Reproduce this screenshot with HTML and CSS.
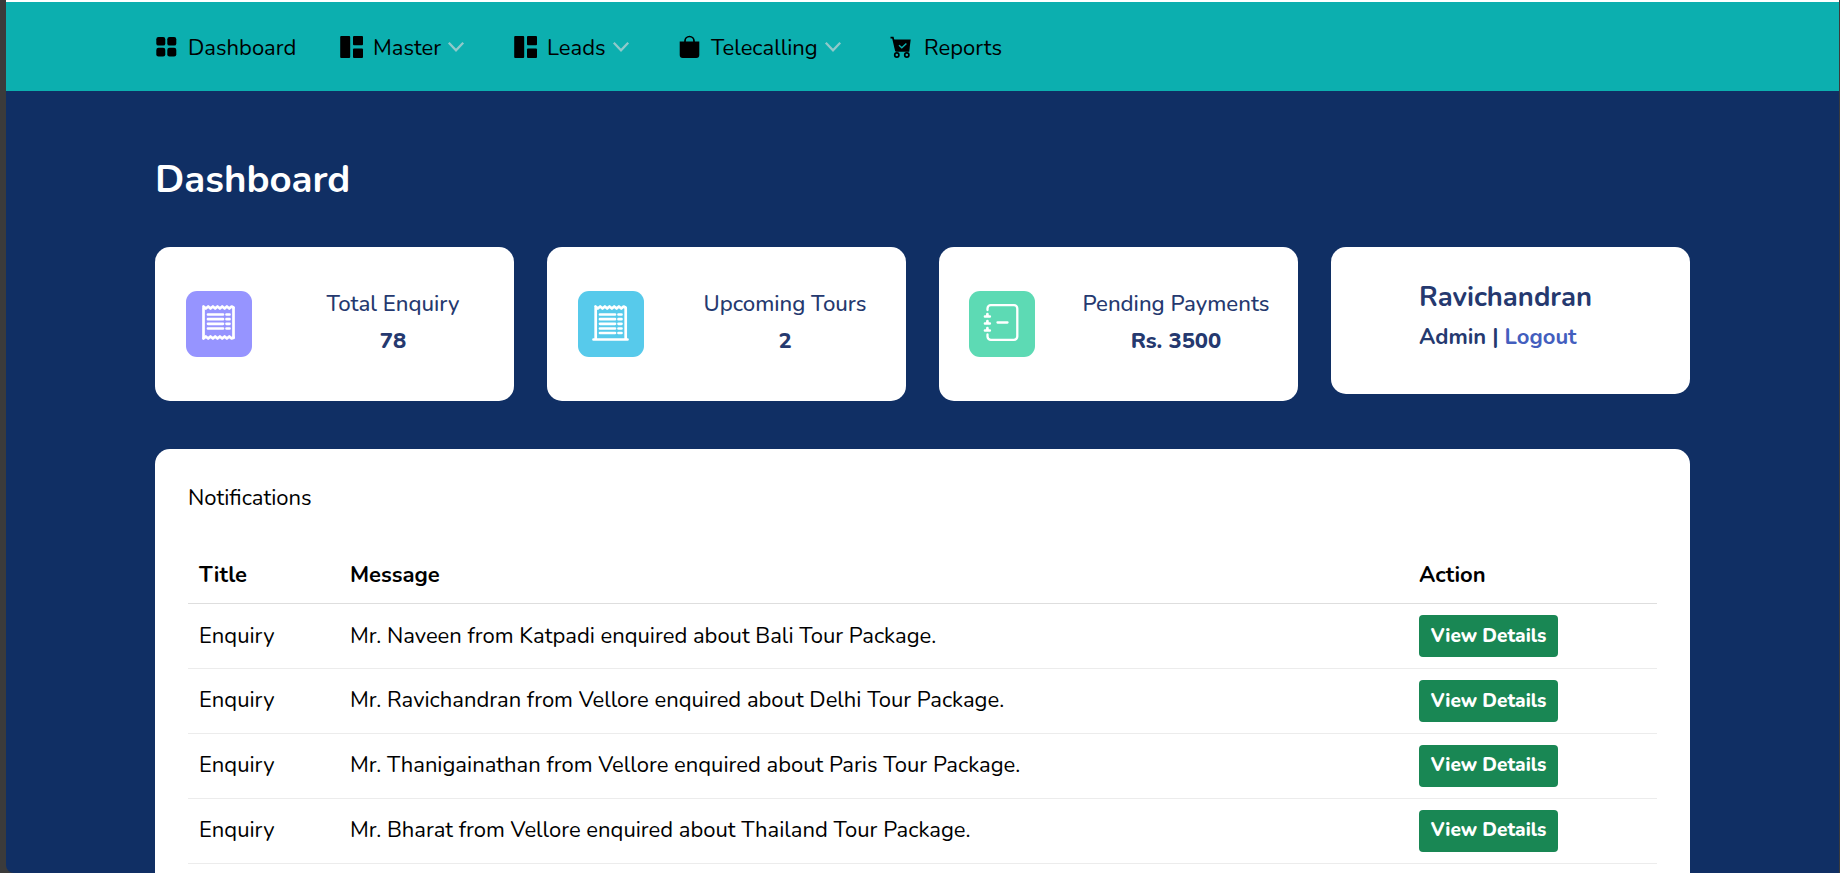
FILE: index.html
```html
<!DOCTYPE html>
<html lang="en">
<head>
<meta charset="utf-8">
<title>Dashboard</title>
<link rel="stylesheet" href="styles.css">
</head>
<body>
<div class="frame">
<div class="app">
<nav class="nav">
  <a class="nav-item n-dash"><svg class="ico" viewBox="0 0 24 24"><g><rect x="1.3" y="2" width="9" height="8.6" rx="2.2"/><rect x="12.3" y="2" width="9" height="8.6" rx="2.2"/><rect x="1.3" y="12.8" width="9" height="8.6" rx="2.2"/><rect x="12.3" y="12.8" width="9" height="8.6" rx="2.2"/></g></svg><span>Dashboard</span></a>
  <a class="nav-item n-master"><svg class="ico" viewBox="0 0 24 24"><g><rect x="0.2" y="1" width="10" height="22" rx="1"/><rect x="13" y="1" width="10" height="9.3" rx="1"/><rect x="13" y="13.4" width="10" height="9.6" rx="1"/></g></svg><span>Master</span><svg class="chev" viewBox="0 0 18 12"><path d="M1.8 1.8 9 9.3 16.2 1.8"/></svg></a>
  <a class="nav-item n-leads"><svg class="ico" viewBox="0 0 24 24"><g><rect x="0.2" y="1" width="10" height="22" rx="1"/><rect x="13" y="1" width="10" height="9.3" rx="1"/><rect x="13" y="13.4" width="10" height="9.6" rx="1"/></g></svg><span>Leads</span><svg class="chev" viewBox="0 0 18 12"><path d="M1.8 1.8 9 9.3 16.2 1.8"/></svg></a>
  <a class="nav-item n-tele"><svg class="ico" viewBox="0 0 24 24"><path d="M.7 6.5h19.6V20a3 3 0 0 1-3 3H3.700a3 3 0 0 1-3-3z"/><path class="line" d="M6 7V6a4.500 4.500 0 0 1 9 0v1"/></svg><span>Telecalling</span><svg class="chev" viewBox="0 0 18 12"><path d="M1.8 1.8 9 9.3 16.2 1.8"/></svg></a>
  <a class="nav-item n-rep"><svg class="ico" viewBox="0 0 24 24"><path d="M4.500 4.500h17.200l-1.500 12.300H6.700z"/><path class="line" d="M1.500 2.700h2.400L7 16"/><circle class="line" cx="7.800" cy="20" r="2.100"/><circle class="line" cx="17.800" cy="20" r="2.100"/><path class="tick" d="M10 10.300l2.800 2.500 4.600-4.300"/></svg><span>Reports</span></a>
</nav>
<main class="main">
  <h1 class="title">Dashboard</h1>
  <section class="cards">
    <div class="card">
      <div class="badge purple"><svg viewBox="0 0 66 66"><path class="w" d="M17.500 17v30M47.500 17v30"/><path class="w" d="M17.500 15.500l2.300 2 2.400-2 2.300 2 2.400-2 2.300 2 2.300-2 2.400 2 2.300-2 2.400 2 2.300-2 2.400 2 2.300-2 1.900 1M17.500 47.500l2.300-2 2.400 2 2.300-2 2.400 2 2.300-2 2.300 2 2.400-2 2.300 2 2.400-2 2.300 2 2.400-2 2.300 2 1.900-1"/><path class="w" d="M22 23.500h15M22 28.200h15M22 32.800h15M22 37.500h15M40.500 23.500h3M40.500 28.200h3M40.500 32.800h3M40.500 37.500h3"/></svg></div>
      <div class="stat"><p>Total Enquiry</p><b>78</b></div>
    </div>
    <div class="card">
      <div class="badge blue"><svg viewBox="0 0 66 66"><path class="w" d="M17.700 17v31M47.700 17v31M15.500 48.500h34"/><path class="w" d="M17.500 15.500l2.300 2 2.400-2 2.300 2 2.400-2 2.300 2 2.300-2 2.400 2 2.300-2 2.400 2 2.300-2 2.400 2 2.300-2 1.900 1"/><path class="w" d="M22 23.500h15M22 28.200h15M22 32.800h15M22 37.500h15M22 42h15M40.500 23.500h3M40.500 28.200h3M40.500 32.800h3M40.500 37.500h3M40.500 42h3"/></svg></div>
      <div class="stat"><p>Upcoming Tours</p><b>2</b></div>
    </div>
    <div class="card third">
      <div class="badge green"><svg viewBox="0 0 66 66"><path class="w g" d="M18.500 19v-1.500a3.300 3.300 0 0 1 3.300-3.300H45a3.300 3.300 0 0 1 3.300 3.300v28A3.300 3.300 0 0 1 45 48.800H21.800a3.300 3.300 0 0 1-3.300-3.300V43.500M28.500 31.500h10"/><path class="w" d="M16 25.500h4.800M18.400 23.200v2M16 32.500h4.800M18.400 30.200v2M16 39.500h4.800M18.400 37.200v2"/></svg></div>
      <div class="stat"><p>Pending Payments</p><b>Rs. 3500</b></div>
    </div>
    <div class="card user">
      <h5>Ravichandran</h5>
      <h6>Admin | <a>Logout</a></h6>
    </div>
  </section>
  <section class="panel">
    <h4>Notifications</h4>
    <table>
      <thead><tr><th class="c1">Title</th><th class="c2">Message</th><th class="c3">Action</th></tr></thead>
      <tbody>
        <tr><td>Enquiry</td><td>Mr. Naveen from Katpadi enquired about Bali Tour Package.</td><td class="act"><a class="btn">View Details</a></td></tr>
        <tr><td>Enquiry</td><td>Mr. Ravichandran from Vellore enquired about Delhi Tour Package.</td><td class="act"><a class="btn">View Details</a></td></tr>
        <tr><td>Enquiry</td><td>Mr. Thanigainathan from Vellore enquired about Paris Tour Package.</td><td class="act"><a class="btn up">View Details</a></td></tr>
        <tr><td>Enquiry</td><td>Mr. Bharat from Vellore enquired about Thailand Tour Package.</td><td class="act"><a class="btn up">View Details</a></td></tr>
      </tbody>
    </table>
  </section>
</main>
</div>
</div>
</body>
</html>
```
FILE: styles.css
```css
* { box-sizing: border-box; margin: 0; }
body { background: #3b3b3b; font-family: Nunito, Lato, "Open Sans", sans-serif; font-size: 22px; color: #000; overflow: hidden; }
.frame { height: 873px; padding: 0 1px 0 6px; }
.app { height: 873px; background: #102f64; border-top: 2px solid #fff; border-radius: 0 0 0 8px; overflow: hidden; }
.nav { height: 89px; background: #0cafaf; display: flex; align-items: center; padding-left: 149px; }
.nav-item { display: flex; align-items: center; height: 30px; white-space: nowrap; flex: none; }
.nav-item span { line-height: 30px; margin-left: 9px; padding-top: 2px; }
.n-dash { width: 185px; }
.n-master { width: 174px; }
.n-leads { width: 165px; }
.n-tele { width: 210px; }
.n-tele span { margin-left: 8px; }
.n-rep span { margin-left: 11px; }
.ico { width: 24px; height: 24px; flex: none; }
.line { fill: none; stroke: #000; stroke-width: 1.7; }
.tick { fill: none; stroke: #0cafaf; stroke-width: 1.5; }
.chev { width: 18px; height: 12px; margin-left: 6px; flex: none; fill: none; stroke: #90c9ca; stroke-width: 2.3; }
.main { padding: 65px 149px 0; }
.title { font-size: 38.4px; line-height: 47px; color: #fff; margin-bottom: 44px; }
.cards { display: flex; gap: 33px; align-items: flex-start; margin-bottom: 48px; }
.card { width: 359px; height: 154px; background: #fff; border-radius: 15px; display: flex; align-items: center; padding-left: 31px; color: #25396f; }
.third { padding-left: 30px; }
.badge { width: 66px; height: 66px; border-radius: 11px; flex: none; }
.badge svg { display: block; width: 66px; height: 66px; }
.purple { background: #9694ff; }
.blue { background: #57caeb; }
.green { background: #5ddab4; }
.w { fill: none; stroke: #fff; stroke-width: 2.7; stroke-linecap: round; stroke-linejoin: round; }
.g { stroke-width: 2.3; }
.stat { width: 262px; flex: none; margin-left: 10px; padding-bottom: 2px; text-align: center; line-height: 37px; white-space: nowrap; font-weight: 500; font-size: 22.2px; }
.stat b { font-weight: 800; font-size: 22px; }
.user { height: 147px; display: block; padding: 32px 0 0 88px; }
.user h5 { font-size: 27.4px; font-weight: 700; line-height: 36px; white-space: nowrap; }
.user h6 { font-size: 22px; line-height: 30px; margin-top: 7px; white-space: nowrap; }
.user a { color: #435ebe; }
.panel { height: 500px; background: #fff; border-radius: 15px; padding: 34px 33px 0; }
.panel h4 { font-size: 22px; font-weight: 400; line-height: 30px; margin-bottom: 35px; }
table { width: 1469px; table-layout: fixed; border-collapse: separate; border-spacing: 0; }
th, td { padding: 0 0 0 11px; text-align: left; border-bottom: 1px solid #ececec; white-space: nowrap; }
th { height: 56px; padding-bottom: 2px; border-bottom-color: #dedede; }
td { height: 65px; }
tr + tr td { padding-bottom: 2px; }
td.act, tr + tr td.act { padding: 0 0 0 12px; }
.c1 { width: 151px; }
.c2 { width: 1068px; }
.c3 { padding-left: 12px; }
.btn { display: flex; width: 139px; height: 42px; padding-bottom: 1px; border-radius: 4px; background: #198754; color: #fff; font-weight: 800; font-size: 19px; justify-content: center; align-items: center; }
.btn.up { padding-bottom: 3px; }
```
